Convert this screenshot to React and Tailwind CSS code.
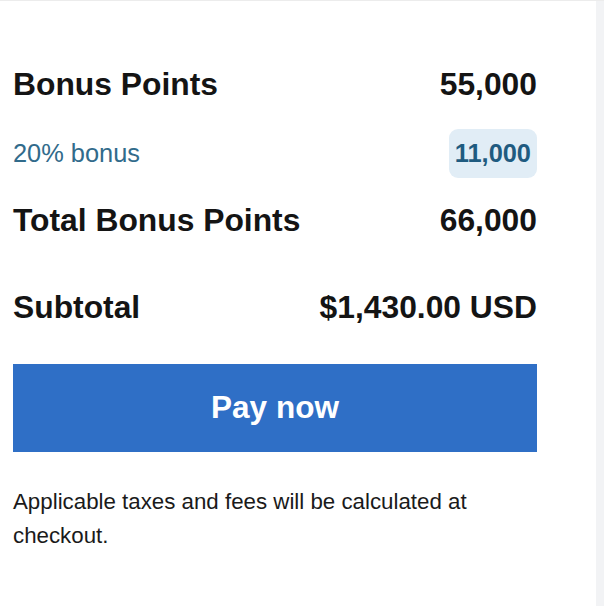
import React from 'react';

const rows = [
  { label: 'Bonus Points', value: '55,000' },
];

const App = () => {
  return (
    <div className="flex min-h-[606px] w-full border-t border-[#ececec] font-['Liberation_Sans',Arial,sans-serif] text-[#141414]">
      <div className="w-[596px] bg-white pl-[13px] pt-[50px]">
        <div className="w-[524px]">
          {/* Points summary */}
          {rows.map((row) => (
            <div key={row.label} className="flex h-[68px] items-center justify-between text-[31.8px] font-bold">
              <span>{row.label}</span>
              <span>{row.value}</span>
            </div>
          ))}
          <div className="flex h-[68px] items-center justify-between">
            <span className="text-[25.4px] text-[#316b8b]">20% bonus</span>
            <span className="flex h-[49px] items-center rounded-[9px] bg-[#e1edf6] px-[6px] text-[25.4px] font-bold text-[#1f5b80]">
              11,000
            </span>
          </div>
          <div className="flex h-[68px] items-center justify-between text-[31.8px] font-bold">
            <span>Total Bonus Points</span>
            <span>66,000</span>
          </div>

          <div className="mt-[19px] flex h-[68px] items-center justify-between text-[31.8px] font-bold">
            <span>Subtotal</span>
            <span>$1,430.00 USD</span>
          </div>

          <button className="mt-[22px] flex h-[88px] w-full items-center justify-center bg-[#2f6fc6] text-[31.5px] font-bold text-white">
            Pay now
          </button>

          <p className="mt-[33px] text-[22.3px] leading-[34px] text-[#1a1a1a]">
            Applicable taxes and fees will be calculated at checkout.
          </p>
        </div>
      </div>
      <div className="flex-1 bg-[#f2f3f5]" />
    </div>
  );
};

export default App;
